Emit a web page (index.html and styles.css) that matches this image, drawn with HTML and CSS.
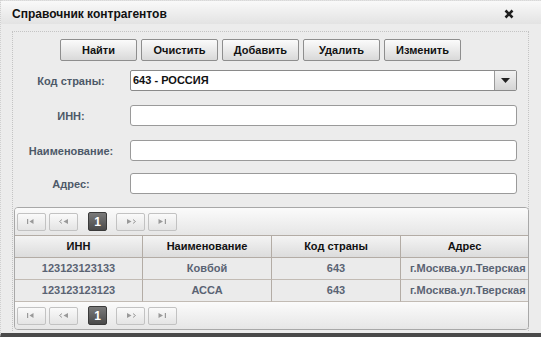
FILE: index.html
```html
<!DOCTYPE html>
<html lang="ru">
<head>
    <meta charset="UTF-8">
    <title>Справочник контрагентов</title>
    <link rel="stylesheet" href="styles.css">
</head>
<body>

<div class="window">
    <div class="titlebar">
        <span class="title">Справочник контрагентов</span>
        <svg class="close" width="10" height="10" viewBox="0 0 10 10">
            <path d="M1.5 1.5 L8.5 8.5 M8.5 1.5 L1.5 8.5" stroke="#1e1e1e" stroke-width="2.6"/>
        </svg>
    </div>

    <div class="panel">
        <div class="toolbar">
            <button class="btn">Найти</button>
            <button class="btn">Очистить</button>
            <button class="btn">Добавить</button>
            <button class="btn">Удалить</button>
            <button class="btn">Изменить</button>
        </div>

        <div class="form">
            <div class="row">
                <label class="label">Код страны:</label>
                <div class="select">
                    <span class="select-value">643 - РОССИЯ</span>
                    <span class="select-btn">
                        <svg width="9" height="5" viewBox="0 0 9 5"><path d="M0 0 H9 L4.5 5 Z" fill="#222"/></svg>
                    </span>
                </div>
            </div>
            <div class="row">
                <label class="label">ИНН:</label>
                <input class="field" type="text">
            </div>
            <div class="row">
                <label class="label">Наименование:</label>
                <input class="field" type="text">
            </div>
            <div class="row row-last">
                <label class="label">Адрес:</label>
                <input class="field" type="text">
            </div>
        </div>

        <div class="grid">
            <div class="pager">
                <span class="pg-btn"><svg width="9" height="5" viewBox="0 0 9 5"><path d="M0 0 H1.2 V5 H0 Z M2.5 2.5 L6.5 0 V5 Z" fill="#999"/></svg></span>
                <span class="pg-btn"><svg width="10" height="5" viewBox="0 0 10 5"><path d="M3 0.5 L0.5 2.5 L3 4.5" fill="none" stroke="#999" stroke-width="1"/><path d="M4.5 2.5 L9 0 V5 Z" fill="#999"/></svg></span>
                <span class="pg-page">1</span>
                <span class="pg-btn"><svg width="10" height="5" viewBox="0 0 10 5"><path d="M1 0 L5.5 2.5 L1 5 Z" fill="#999"/><path d="M7 0.5 L9.5 2.5 L7 4.5" fill="none" stroke="#999" stroke-width="1"/></svg></span>
                <span class="pg-btn"><svg width="9" height="5" viewBox="0 0 9 5"><path d="M0.5 0 L5 2.5 L0.5 5 Z M6.8 0 H8 V5 H6.8 Z" fill="#999"/></svg></span>
            </div>

            <div class="table-wrap">
                <table class="table">
                    <colgroup>
                        <col class="c1"><col class="c2"><col class="c3"><col class="c4">
                    </colgroup>
                    <thead>
                        <tr>
                            <th>ИНН</th>
                            <th>Наименование</th>
                            <th>Код страны</th>
                            <th>Адрес</th>
                        </tr>
                    </thead>
                    <tbody>
                        <tr>
                            <td>123123123133</td>
                            <td>Ковбой</td>
                            <td>643</td>
                            <td>г.Москва.ул.Тверская</td>
                        </tr>
                        <tr>
                            <td>123123123123</td>
                            <td>АССА</td>
                            <td>643</td>
                            <td>г.Москва.ул.Тверская</td>
                        </tr>
                    </tbody>
                </table>
            </div>

            <div class="pager">
                <span class="pg-btn"><svg width="9" height="5" viewBox="0 0 9 5"><path d="M0 0 H1.2 V5 H0 Z M2.5 2.5 L6.5 0 V5 Z" fill="#999"/></svg></span>
                <span class="pg-btn"><svg width="10" height="5" viewBox="0 0 10 5"><path d="M3 0.5 L0.5 2.5 L3 4.5" fill="none" stroke="#999" stroke-width="1"/><path d="M4.5 2.5 L9 0 V5 Z" fill="#999"/></svg></span>
                <span class="pg-page">1</span>
                <span class="pg-btn"><svg width="10" height="5" viewBox="0 0 10 5"><path d="M1 0 L5.5 2.5 L1 5 Z" fill="#999"/><path d="M7 0.5 L9.5 2.5 L7 4.5" fill="none" stroke="#999" stroke-width="1"/></svg></span>
                <span class="pg-btn"><svg width="9" height="5" viewBox="0 0 9 5"><path d="M0.5 0 L5 2.5 L0.5 5 Z M6.8 0 H8 V5 H6.8 Z" fill="#999"/></svg></span>
            </div>
        </div>
    </div>
</div>

</body>
</html>
```

FILE: styles.css
```css
body {
    margin: 0;
    padding: 0;
    font-family: "Liberation Sans", Arial, sans-serif;
    background-color: #ececec;
}
.window {
    width: 541px;
    height: 337px;
    box-sizing: border-box;
    background-color: #ececec;
    border-left: 1px dotted #d0d0d0;
    border-bottom: 4px solid #4a4a4a;
    overflow: hidden;
}
.titlebar {
    height: 24px;
    display: flex;
    align-items: center;
    justify-content: space-between;
    padding: 0 27px 0 11px;
    background: linear-gradient(#f9f9f9, #e3e3e3);
    border-top: 1px dotted #d8d8d8;
    box-sizing: border-box;
}
.title {
    font-size: 12px;
    font-weight: bold;
    color: #111;
    padding-top: 2px;
}
.close {
    margin-top: 2px;
}
.panel {
    margin: 7px 12px 0 11px;
    height: 300px;
    box-sizing: border-box;
    border: 1px dotted #c4c4c4;
    border-bottom: none;
}
.toolbar {
    display: flex;
    gap: 4px;
    padding: 7px 0 0 47px;
}
.btn {
    width: 77px;
    height: 22px;
    padding: 0;
    border: 1px solid #8e8e8e;
    border-radius: 2px;
    background: linear-gradient(#fbfbfb, #d9d9d9);
    font-family: "Liberation Sans", Arial, sans-serif;
    font-size: 11px;
    font-weight: bold;
    color: #111;
}
.form {
    display: flex;
    flex-direction: column;
    gap: 14px;
    margin-top: 9px;
}
.row {
    display: flex;
    align-items: center;
    height: 21px;
}
.row-last {
    margin-top: -2px;
}
.label {
    width: 116px;
    text-align: center;
    font-size: 11px;
    font-weight: bold;
    color: #4d5968;
    margin-right: 1px;
}
.field {
    width: 387px;
    height: 21px;
    box-sizing: border-box;
    border: 1px solid #9a9a9a;
    border-radius: 3px;
    background: #fff;
    margin: 0;
}
.select {
    width: 387px;
    height: 21px;
    box-sizing: border-box;
    display: flex;
    border: 1px solid #8a8a8a;
    border-radius: 2px;
    background: #fff;
}
.select-value {
    flex: 1;
    padding: 3px 0 0 2px;
    font-size: 11px;
    font-weight: bold;
    color: #111;
}
.select-btn {
    width: 21px;
    display: flex;
    align-items: center;
    justify-content: center;
    border-left: 1px solid #9a9a9a;
    background: linear-gradient(#f2f2f2, #d4d4d4);
}
.grid {
    margin: 13px 0 0 1px;
    width: 515px;
    box-sizing: border-box;
    border: 1px solid #a8a8a8;
    border-radius: 4px;
    overflow: hidden;
}
.pager {
    height: 27px;
    display: flex;
    align-items: center;
    padding-left: 2px;
    background: linear-gradient(#fbfbfb, #e6e6e6);
}
.pg-btn {
    width: 29px;
    height: 18px;
    box-sizing: border-box;
    margin-right: 3px;
    display: flex;
    align-items: center;
    justify-content: center;
    border: 1px solid #c2c2c2;
    border-radius: 2px;
    background: linear-gradient(#fafafa, #e4e4e4);
}
.pg-page {
    width: 19px;
    height: 19px;
    box-sizing: border-box;
    margin: 0 9px 0 7px;
    display: flex;
    align-items: center;
    justify-content: center;
    border: 1px solid #3a3a3a;
    border-radius: 2px;
    background: linear-gradient(#7a7a7a, #4a4a4a);
    color: #fff;
    font-size: 12px;
    font-weight: bold;
}
.table-wrap {
    overflow: hidden;
}
.table {
    width: 513px;
    table-layout: fixed;
    border-collapse: separate;
    border-spacing: 0;
}
.c1 { width: 128px; }
.c2 { width: 129px; }
.c3 { width: 129px; }
.c4 { width: 127px; }
.table th {
    line-height: 21px;
    padding: 0;
    font-size: 11px;
    font-weight: bold;
    color: #111;
    text-align: center;
    background: linear-gradient(#f4f4f4, #dcdcdc);
    border-top: 1px solid #b3aca5;
    border-bottom: 1px solid #b3aca5;
    border-right: 1px solid #b3aca5;
}
.table td {
    line-height: 21px;
    padding: 0 9px;
    font-size: 11px;
    font-weight: bold;
    color: #5a6373;
    text-align: center;
    white-space: nowrap;
    overflow: hidden;
    background: #ebebeb;
    border-bottom: 1px solid #c2bbb4;
    border-right: 1px solid #b3aca5;
}
.table th:last-child,
.table td:last-child {
    border-right: none;
}
```
